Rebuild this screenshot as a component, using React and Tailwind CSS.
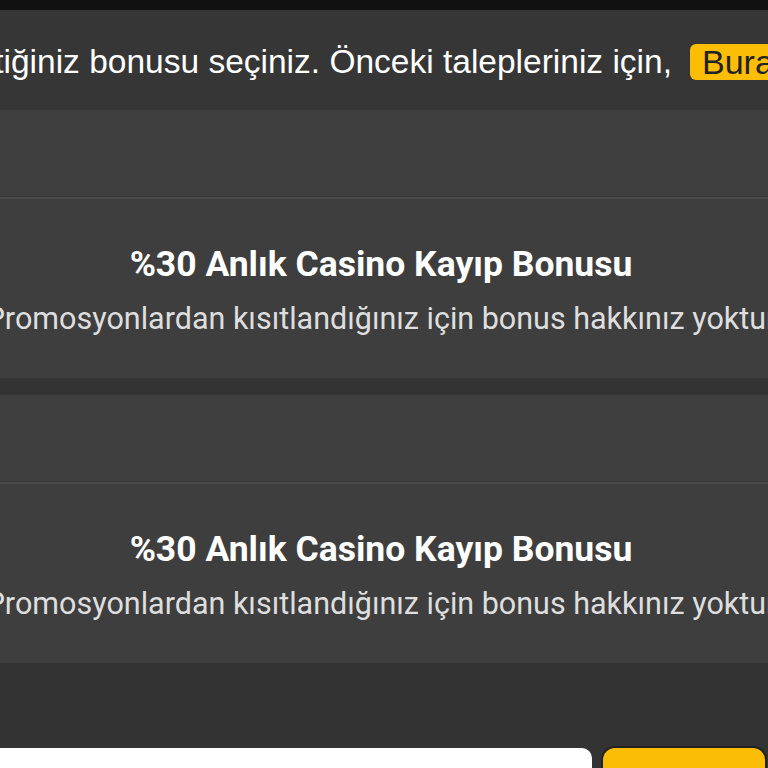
import React from 'react';

const bonuses = [
  { id: 1, title: '%30 Anlık Casino Kayıp Bonusu', note: 'Promosyonlardan kısıtlandığınız için bonus hakkınız yoktur' },
  { id: 2, title: '%30 Anlık Casino Kayıp Bonusu', note: 'Promosyonlardan kısıtlandığınız için bonus hakkınız yoktur' },
];

const BonusCard = ({ bonus }) => (
  <div className="bg-[#3e3e3e]">
    <div className="h-[86px] bg-[#3f3f3f]" />
    <div className="h-[1px] bg-[#363636]" />
    <div className="h-[2px] bg-[#4b4b4b]" />
    <div className="h-[179px] flex flex-col items-center justify-center gap-[18px] pr-[6px] pt-[2px]">
      <h3 className="whitespace-nowrap text-[35.5px] leading-[40px] font-bold text-white font-['Roboto',sans-serif]">
        {bonus.title}
      </h3>
      <p className="whitespace-nowrap text-[30.5px] leading-[34px] text-[#dedede] font-['Roboto',sans-serif]">
        {bonus.note}
      </p>
    </div>
  </div>
);

export default function App() {
  return (
    <div className="w-[768px] h-[768px] overflow-hidden bg-[#333333]">
      {/* Top bar */}
      <div className="h-[10px] bg-[#111111]" />

      {/* Info header */}
      <div className="h-[100px] bg-[#363636] flex items-center pt-[4px]">
        <div className="w-[672px] shrink-0 flex justify-end">
          <p className="whitespace-nowrap text-[33.5px] leading-[40px] text-white font-['Liberation_Sans',Arial,sans-serif]">
            Lütfen talep ettiğiniz bonusu seçiniz. Önceki talepleriniz için,
          </p>
        </div>
        <button className="ml-[18px] shrink-0 whitespace-nowrap rounded-[6px] bg-[#fcbd06] px-[12px] h-[36px] text-[34px] leading-[36px] text-[#222] font-['Liberation_Sans',Arial,sans-serif]">
          Buraya tıklayınız
        </button>
      </div>

      {/* Bonus list */}
      <div className="flex flex-col gap-[17px]">
        {bonuses.map((b) => (
          <BonusCard key={b.id} bonus={b} />
        ))}
      </div>

      {/* Form row */}
      <div className="mt-[85px] flex items-start gap-[11px]">
        <input
          className="w-[592px] h-[40px] bg-white rounded-tr-[10px] outline-none"
          readOnly
        />
        <div className="w-[162px] h-[40px] rounded-t-[12px] bg-[#fcbd06] shadow-[0_0_0_2px_#222]" />
      </div>
    </div>
  );
}
